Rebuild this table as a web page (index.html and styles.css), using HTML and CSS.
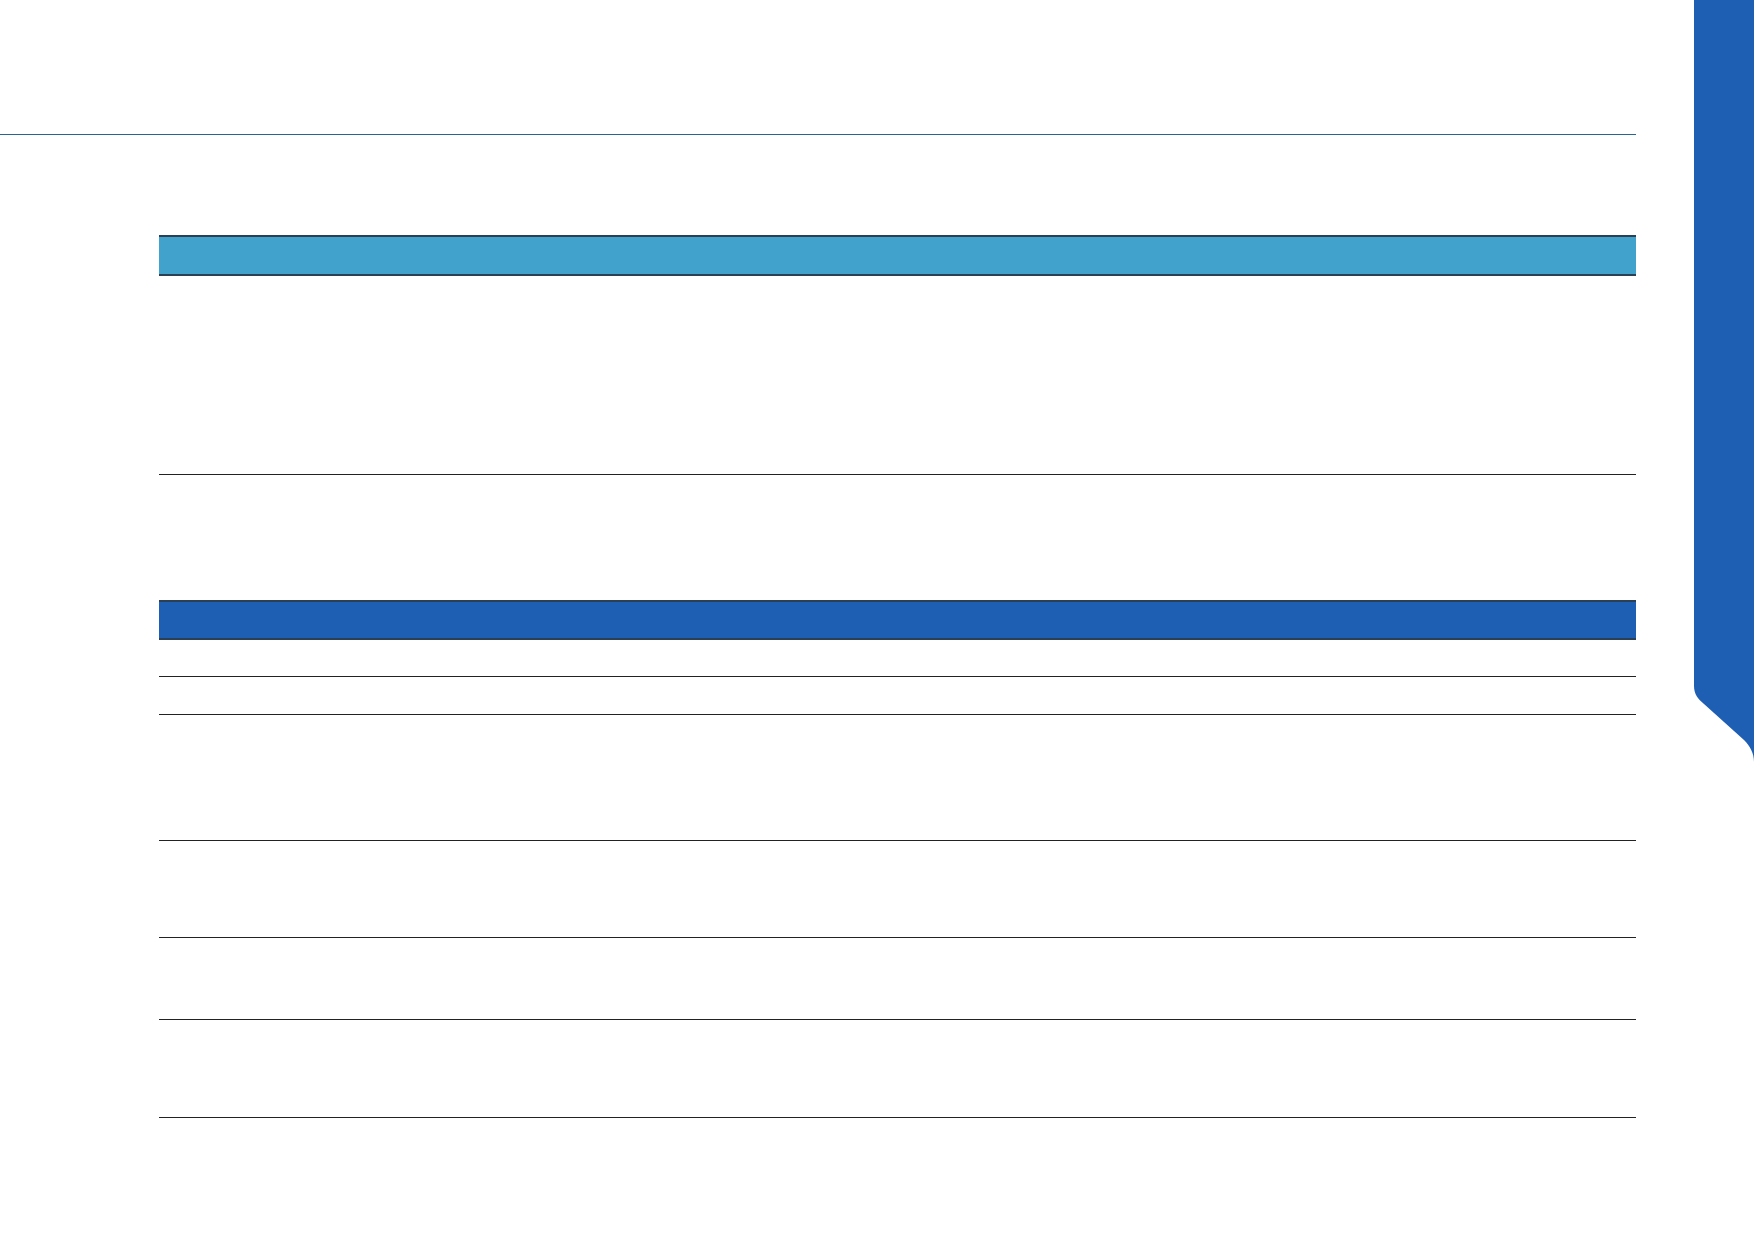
FILE: index.html
```html
<!DOCTYPE html>
<html lang="en">
  <head>
    <meta charset="UTF-8" />
    <meta name="viewport" content="width=device-width, initial-scale=1.0" />
    <title>Report</title>
    <link rel="stylesheet" href="styles.css">
  </head>
  <body>
    <div id="page">
      <div id="main">
        <!-- page header rule -->
        <div id="header"></div>

        <div id="content">
          <!-- first table -->
          <div class="table">
            <div class="thead light"></div>
            <div class="row" style="height: 198px"></div>
          </div>

          <!-- second table -->
          <div class="table second">
            <div class="thead dark"></div>
            <div class="row" style="height: 36px"></div>
            <div class="row" style="height: 37px"></div>
            <div class="row" style="height: 125px"></div>
            <div class="row" style="height: 96px"></div>
            <div class="row" style="height: 81px"></div>
            <div class="row" style="height: 97px"></div>
          </div>
        </div>
      </div>

      <!-- side tab -->
      <div id="tab">
        <svg width="60" height="762" viewBox="0 0 60 762">
          <path d="M0 0 H60 V762 C60 753 56 746 50 740 L10 704 C4 699 0 694 0 686 Z" fill="#1f5fb3" />
        </svg>
      </div>
    </div>
  </body>
</html>
```

FILE: styles.css
```css
html,
body {
  margin: 0;
  background: #fff;
  font-family: "Liberation Sans", Arial, sans-serif;
}

#page {
  display: flex;
  align-items: flex-start;
  gap: 58px;
  width: 1754px;
  height: 1240px;
  overflow: hidden;
}

#main {
  width: 1636px;
}

#header {
  height: 134px;
  border-bottom: 1px solid #2c6390;
}

#content {
  padding: 100px 0 0 159px;
}

.table {
  width: 1477px;
}

.table.second {
  margin-top: 125px;
}

.thead {
  border-top: 2px solid #2b3f55;
  border-bottom: 2px solid #2b3f55;
}

.thead.light {
  height: 37px;
  background: #41a2cb;
}

.thead.dark {
  height: 36px;
  background: #1f5fb3;
}

.row {
  border-bottom: 1px solid #222;
}

#tab {
  width: 60px;
}

#tab > svg {
  display: block;
}
```
